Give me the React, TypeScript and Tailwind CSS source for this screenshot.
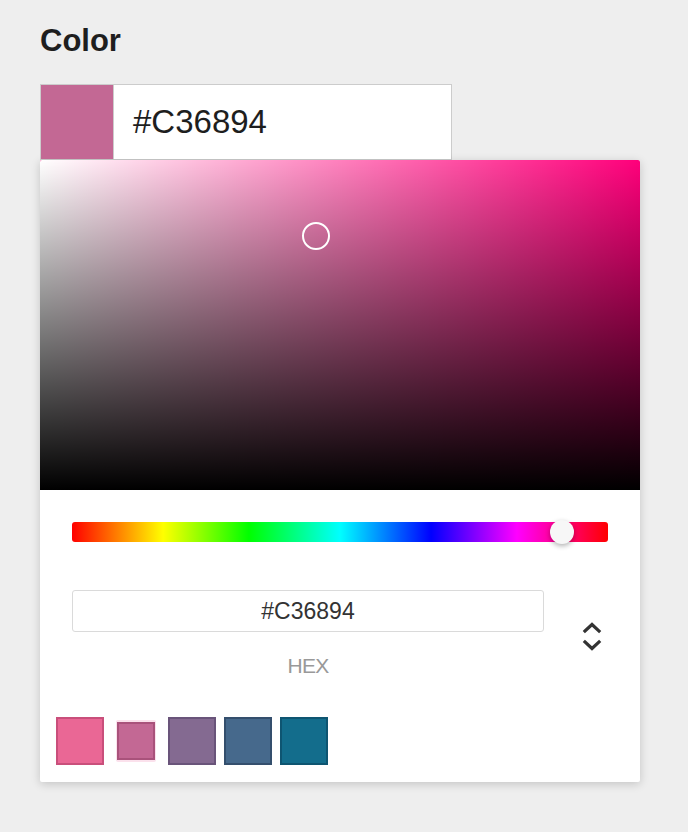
const swatches = [
  { color: "bg-[#ea6795]", border: "border-[#c94f7b]" },
  { color: "bg-[#c36894]", border: "border-[#a9527b]", active: true },
  { color: "bg-[#846a91]", border: "border-[#69547a]" },
  { color: "bg-[#46698c]", border: "border-[#344f6d]" },
  { color: "bg-[#136d8c]", border: "border-[#0e5571]" },
];

function Chevrons() {
  return (
    <svg width="22" height="40" viewBox="0 0 22 40" fill="none" stroke="#333" strokeWidth="3.2" strokeLinecap="square">
      <path d="M4 15 L11 8.5 L18 15" />
      <path d="M4 26 L11 32.5 L18 26" />
    </svg>
  );
}

export default function App() {
  return (
    <div className="min-h-[832px] w-[688px] bg-[#eeeeee] px-10 pt-[21px] font-['Helvetica','Liberation_Sans',sans-serif] text-[#1e1e1e]">
      <h2 className="text-[31px] font-bold leading-[40px]">Color</h2>

      <div className="mt-[23px] flex h-[76px] w-[412px] border border-[#cccccc]">
        <div className="w-[72px] bg-[#c36894]" />
        <div className="flex flex-1 items-center border-l border-[#cccccc] bg-white pl-[19px] text-[33px]">
          #C36894
        </div>
      </div>

      <div className="w-[600px] overflow-hidden rounded-[2px] bg-white shadow-[0_2px_10px_rgba(0,0,0,0.18)]">
        <div className="relative h-[330px] bg-[#ff007b]">
          <div className="absolute inset-0 bg-gradient-to-r from-white to-transparent" />
          <div className="absolute inset-0 bg-gradient-to-t from-black to-transparent" />
          <div className="absolute left-[262px] top-[62px] h-[28px] w-[28px] rounded-full border-2 border-white" />
        </div>

        <div className="px-8 pt-8">
          <div className="relative h-[20px] rounded-[3px] bg-[linear-gradient(to_right,#f00_0%,#ff0_17%,#0f0_33%,#0ff_50%,#00f_67%,#f0f_83%,#f00_100%)]">
            <div className="absolute left-[478px] top-[-2px] h-[24px] w-[24px] rounded-full bg-[#f7f7f7] shadow-[0_2px_5px_rgba(0,0,0,0.3)]" />
          </div>

          <div className="mt-[48px] flex items-start">
            <div className="w-[472px]">
              <div className="flex h-[42px] items-center justify-center rounded-[3px] border border-[#dadada] text-[23px] text-[#333]">
                #C36894
              </div>
              <div className="mt-[20px] text-center text-[21px] leading-[28px] tracking-[-0.8px] text-[#999]">
                HEX
              </div>
            </div>
            <div className="ml-[37px] mt-[26px]">
              <Chevrons />
            </div>
          </div>

          <div className="mt-[37px] flex items-center gap-2 -ml-4 pb-[17px]">
            {swatches.map((s, i) =>
              s.active ? (
                <div key={i} className="mx-[4px] flex h-[42px] w-[40px] items-center justify-center rounded-[2px] bg-[#fbe1ec]">
                  <div className={`h-[38px] w-[38px] border-2 ${s.color} ${s.border}`} />
                </div>
              ) : (
                <div key={i} className={`h-[48px] w-[48px] border-2 ${s.color} ${s.border}`} />
              )
            )}
          </div>
        </div>
      </div>
    </div>
  );
}
